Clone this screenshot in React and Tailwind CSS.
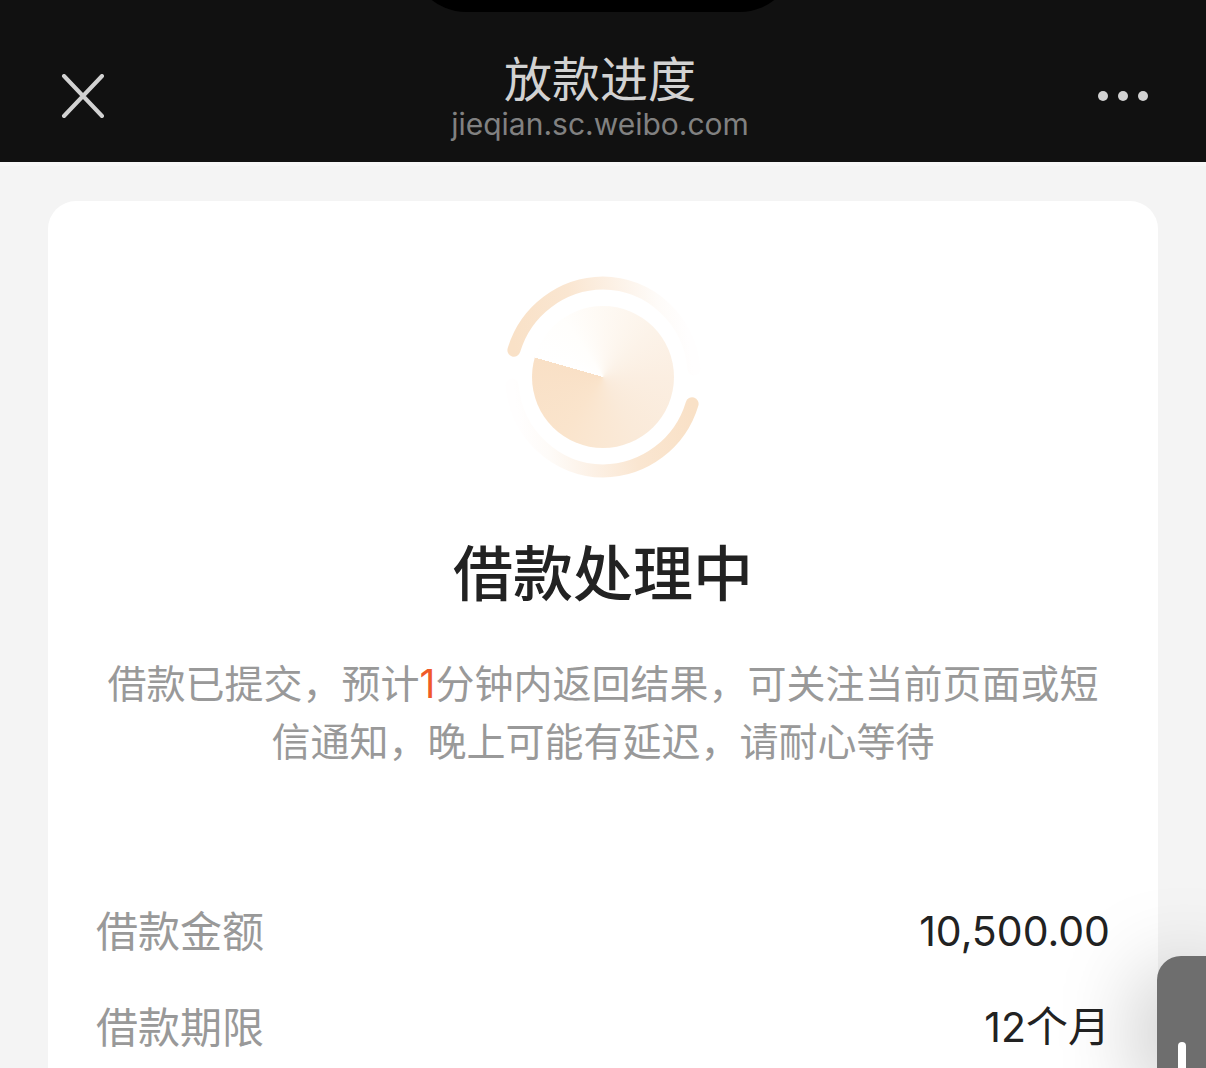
function CloseIcon() {
  return (
    <svg viewBox="0 0 44 44" className="size-11" fill="none" stroke="#d2d2d2" strokeWidth="4" strokeLinecap="round" aria-hidden="true">
      <path d="M3 2 L41 42 M41 2 L3 42" />
    </svg>
  );
}

function MoreIcon() {
  return (
    <svg viewBox="0 0 50 10" className="h-[10px] w-[50px]" fill="#d2d2d2" aria-hidden="true">
      <circle cx="5" cy="5" r="5" />
      <circle cx="25" cy="5" r="5" />
      <circle cx="45" cy="5" r="5" />
    </svg>
  );
}

function Spinner() {
  return (
    <div className="grid size-[202px] place-items-center" role="img" aria-label="处理中">
      <svg viewBox="0 0 202 202" className="col-start-1 row-start-1 size-full" fill="none" strokeWidth="13" strokeLinecap="round">
        <defs>
          <linearGradient id="arcTop" gradientUnits="userSpaceOnUse" x1="12" y1="74" x2="185" y2="50">
            <stop offset="0" stopColor="#f9e1c7" />
            <stop offset="0.35" stopColor="#fae6d1" />
            <stop offset="0.6" stopColor="#fcf0e4" />
            <stop offset="0.85" stopColor="#fefbf8" />
            <stop offset="1" stopColor="#fffefe" />
          </linearGradient>
          <linearGradient id="arcBottom" gradientUnits="userSpaceOnUse" x1="190" y1="128" x2="17" y2="152">
            <stop offset="0" stopColor="#f9e1c7" />
            <stop offset="0.35" stopColor="#fae6d1" />
            <stop offset="0.6" stopColor="#fcf0e4" />
            <stop offset="0.85" stopColor="#fefbf8" />
            <stop offset="1" stopColor="#fffefe" />
          </linearGradient>
        </defs>
        <path d="M11.9 74.2 A94 94 0 0 1 101 7 A92 94 0 0 1 192 93" stroke="url(#arcTop)" />
        <path d="M190.1 127.8 A94 94 0 0 1 101 195 A92 94 0 0 1 10 109" stroke="url(#arcBottom)" />
      </svg>
      <div className="col-start-1 row-start-1 size-[142px] rounded-full bg-[conic-gradient(from_286deg,#ffffff_0deg,#fffefc_40deg,#fef9f3_75deg,#fcf3e9_120deg,#fbeee1_165deg,#faead9_225deg,#fae7d2_260deg,#fae4cc_290deg,#f9e0c6_360deg)]" />
    </div>
  );
}

function Row({ label, children }) {
  return (
    <div className="flex items-center justify-between text-[42px] leading-[63px]">
      <dt className="text-[#999999]">{label}</dt>
      <dd className="text-[#222222]">{children}</dd>
    </div>
  );
}

export default function App() {
  return (
    <div className="h-screen overflow-hidden bg-[#f4f4f4] font-['Inter','Noto_Sans_CJK_SC',sans-serif]">
      <header className="relative grid h-[162px] grid-cols-[1fr_auto_1fr] items-center overflow-hidden bg-[#111111] pt-[30px] pl-12 pr-[54px]">
        <div className="absolute -top-[98px] left-1/2 h-[110px] w-[384px] -translate-x-1/2 rounded-full bg-black" />
        <button type="button" aria-label="关闭" className="justify-self-start px-[13px]">
          <CloseIcon />
        </button>
        <div className="text-center">
          <h1 className="text-[48px] leading-[56px] text-[#d2d2d2]">放款进度</h1>
          <p className="text-[30px] leading-8 text-[#818181]">jieqian.sc.weibo.com</p>
        </div>
        <button type="button" aria-label="更多" className="justify-self-end px-1 py-4">
          <MoreIcon />
        </button>
      </header>

      <main className="border-t-4 border-[#f7f7f7] px-12 pt-[35px]">
        <section className="flex flex-col items-center rounded-[28px] bg-white px-12 pt-[75px] pb-12">
          <Spinner />
          <h2 className="mt-[54px] text-[60px] leading-[84px] font-medium text-[#222222]">借款处理中</h2>
          <p className="mt-[39px] text-center text-[39px] leading-[58px] text-[#999999]">
            借款已提交，预计<span className="text-[#f05a28]">1</span>分钟内返回结果，可关注当前页面或短信通知，晚上可能有延迟，请耐心等待
          </p>
          <dl className="mt-32 flex w-full flex-col gap-8">
            <Row label="借款金额"><span className="text-[41px]">10,500.00</span></Row>
            <Row label="借款期限"><span className="text-[41px]">12</span>个月</Row>
          </dl>
        </section>
      </main>

      <button
        type="button"
        aria-label="展开"
        className="fixed right-0 bottom-0 flex h-28 w-[49px] items-end justify-center rounded-tl-[24px] bg-[#6e6e6e] shadow-[0_20px_90px_rgba(0,0,0,0.4)]"
      >
        <span className="h-[26px] w-2 rounded-t-full bg-white" />
      </button>
    </div>
  );
}
